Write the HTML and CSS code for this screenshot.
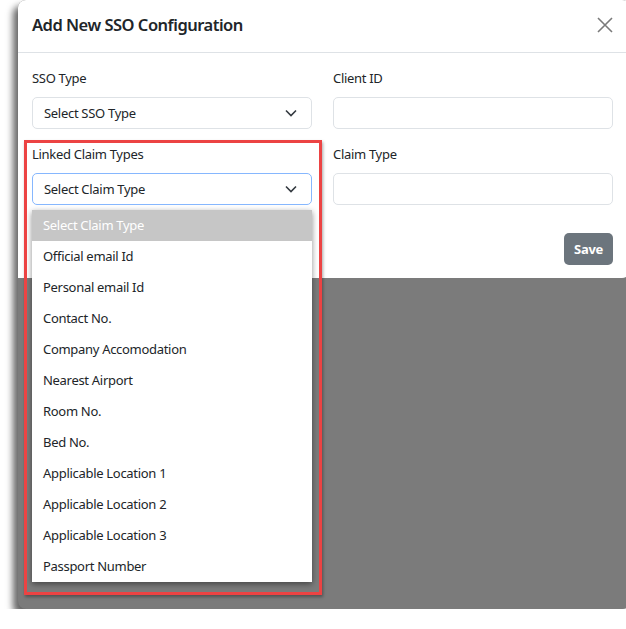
FILE: index.html
```html
<!DOCTYPE html>
<html>
<head>
<meta charset="utf-8">
<link rel="stylesheet" href="styles.css">
</head>
<body>
<div class="frame">
  <div class="modal">
    <div class="modal-header">
      <h1 class="title">Add New SSO Configuration</h1>
      <svg class="close" width="16" height="16" viewBox="0 0 16 16"><path d="M1 1L15 15M15 1L1 15" stroke="#7a7a7a" stroke-width="1.6" fill="none"/></svg>
    </div>
    <div class="modal-body">
      <div class="grid">
        <div class="field">
          <label class="label">SSO Type</label>
          <div class="select"><span>Select SSO Type</span>
            <svg class="chev" width="12" height="8" viewBox="0 0 12 8"><path d="M1 1.5L6 6.5L11 1.5" stroke="#343a40" stroke-width="1.6" fill="none"/></svg>
          </div>
        </div>
        <div class="field">
          <label class="label">Client ID</label>
          <div class="input"></div>
        </div>
        <div class="field">
          <label class="label">Linked Claim Types</label>
          <div class="select focused"><span>Select Claim Type</span>
            <svg class="chev" width="12" height="8" viewBox="0 0 12 8"><path d="M1 1.5L6 6.5L11 1.5" stroke="#343a40" stroke-width="1.6" fill="none"/></svg>
          </div>
        </div>
        <div class="field">
          <label class="label">Claim Type</label>
          <div class="input"></div>
        </div>
      </div>
      <div class="actions">
        <button class="btn-save">Save</button>
      </div>
    </div>
  </div>
  <ul class="dropdown">
    <li class="active">Select Claim Type</li>
    <li>Official email Id</li>
    <li>Personal email Id</li>
    <li>Contact No.</li>
    <li>Company Accomodation</li>
    <li>Nearest Airport</li>
    <li>Room No.</li>
    <li>Bed No.</li>
    <li>Applicable Location 1</li>
    <li>Applicable Location 2</li>
    <li>Applicable Location 3</li>
    <li>Passport Number</li>
  </ul>
  <div class="highlight"></div>
</div>
</body>
</html>
```

FILE: styles.css
```css
html, body {
  margin: 0;
  padding: 0;
  background: #ffffff;
}
body {
  font-family: "Noto Sans", "Open Sans", sans-serif;
  color: #212529;
}
.frame {
  position: relative;
  margin-left: 18px;
  width: 612px;
  height: 609px;
  background: #7b7b7b;
  border-radius: 8px;
  box-shadow: -5px 6px 7px rgba(0, 0, 0, 0.6);
}
.modal {
  background: #ffffff;
  height: 278px;
  border-radius: 8px 8px 8px 0;
}
.modal-header {
  height: 52px;
  border-bottom: 1px solid #dee2e6;
  display: flex;
  align-items: center;
  justify-content: space-between;
  padding: 0 17px 0 14px;
}
.title {
  margin: 0;
  font-size: 16.5px;
  font-weight: 600;
  letter-spacing: -0.5px;
  line-height: 24px;
  color: #212529;
  padding-bottom: 3px;
}
.close {
  margin-top: -2px;
}
.modal-body {
  padding: 15px 13px 13px 14px;
  width: 581px;
}
.grid {
  display: grid;
  grid-template-columns: 280px 280px;
  column-gap: 21px;
  row-gap: 15px;
}
.field {
  display: flex;
  flex-direction: column;
}
.label {
  font-size: 13px;
  letter-spacing: -0.3px;
  line-height: 20px;
  margin-bottom: 9px;
  color: #212529;
}
.select, .input {
  box-sizing: border-box;
  height: 32px;
  border: 1px solid #dee2e6;
  border-radius: 5px;
  background: #fff;
}
.select {
  display: flex;
  align-items: center;
  justify-content: space-between;
  padding: 0 14px 0 11px;
  font-size: 13px;
  letter-spacing: -0.3px;
}
.select.focused {
  border-color: #86b7fe;
}
.chev {
  display: block;
}
.actions {
  display: flex;
  justify-content: flex-end;
  margin-top: 28px;
}
.btn-save {
  font-family: inherit;
  background: #6c757d;
  color: #fff;
  border: none;
  border-radius: 5px;
  font-size: 13px;
  font-weight: 700;
  letter-spacing: -0.3px;
  height: 32px;
  width: 49px;
  padding: 0;
}
.dropdown {
  position: absolute;
  left: 14px;
  top: 210px;
  width: 280px;
  margin: 0;
  padding: 0;
  list-style: none;
  background: #fff;
  box-shadow: 0 2px 6px rgba(0, 0, 0, 0.45);
}
.dropdown li {
  height: 31px;
  line-height: 31px;
  padding-left: 11px;
  font-size: 13px;
  letter-spacing: -0.3px;
  color: #212529;
}
.dropdown li.active {
  background: #c6c6c6;
  color: #ffffff;
}
.highlight {
  position: absolute;
  left: 6px;
  top: 140px;
  width: 298px;
  height: 455px;
  box-sizing: border-box;
  border: 3px solid #ec4343;
  box-shadow: 1px 2px 3px rgba(0, 0, 0, 0.35);
}
```
